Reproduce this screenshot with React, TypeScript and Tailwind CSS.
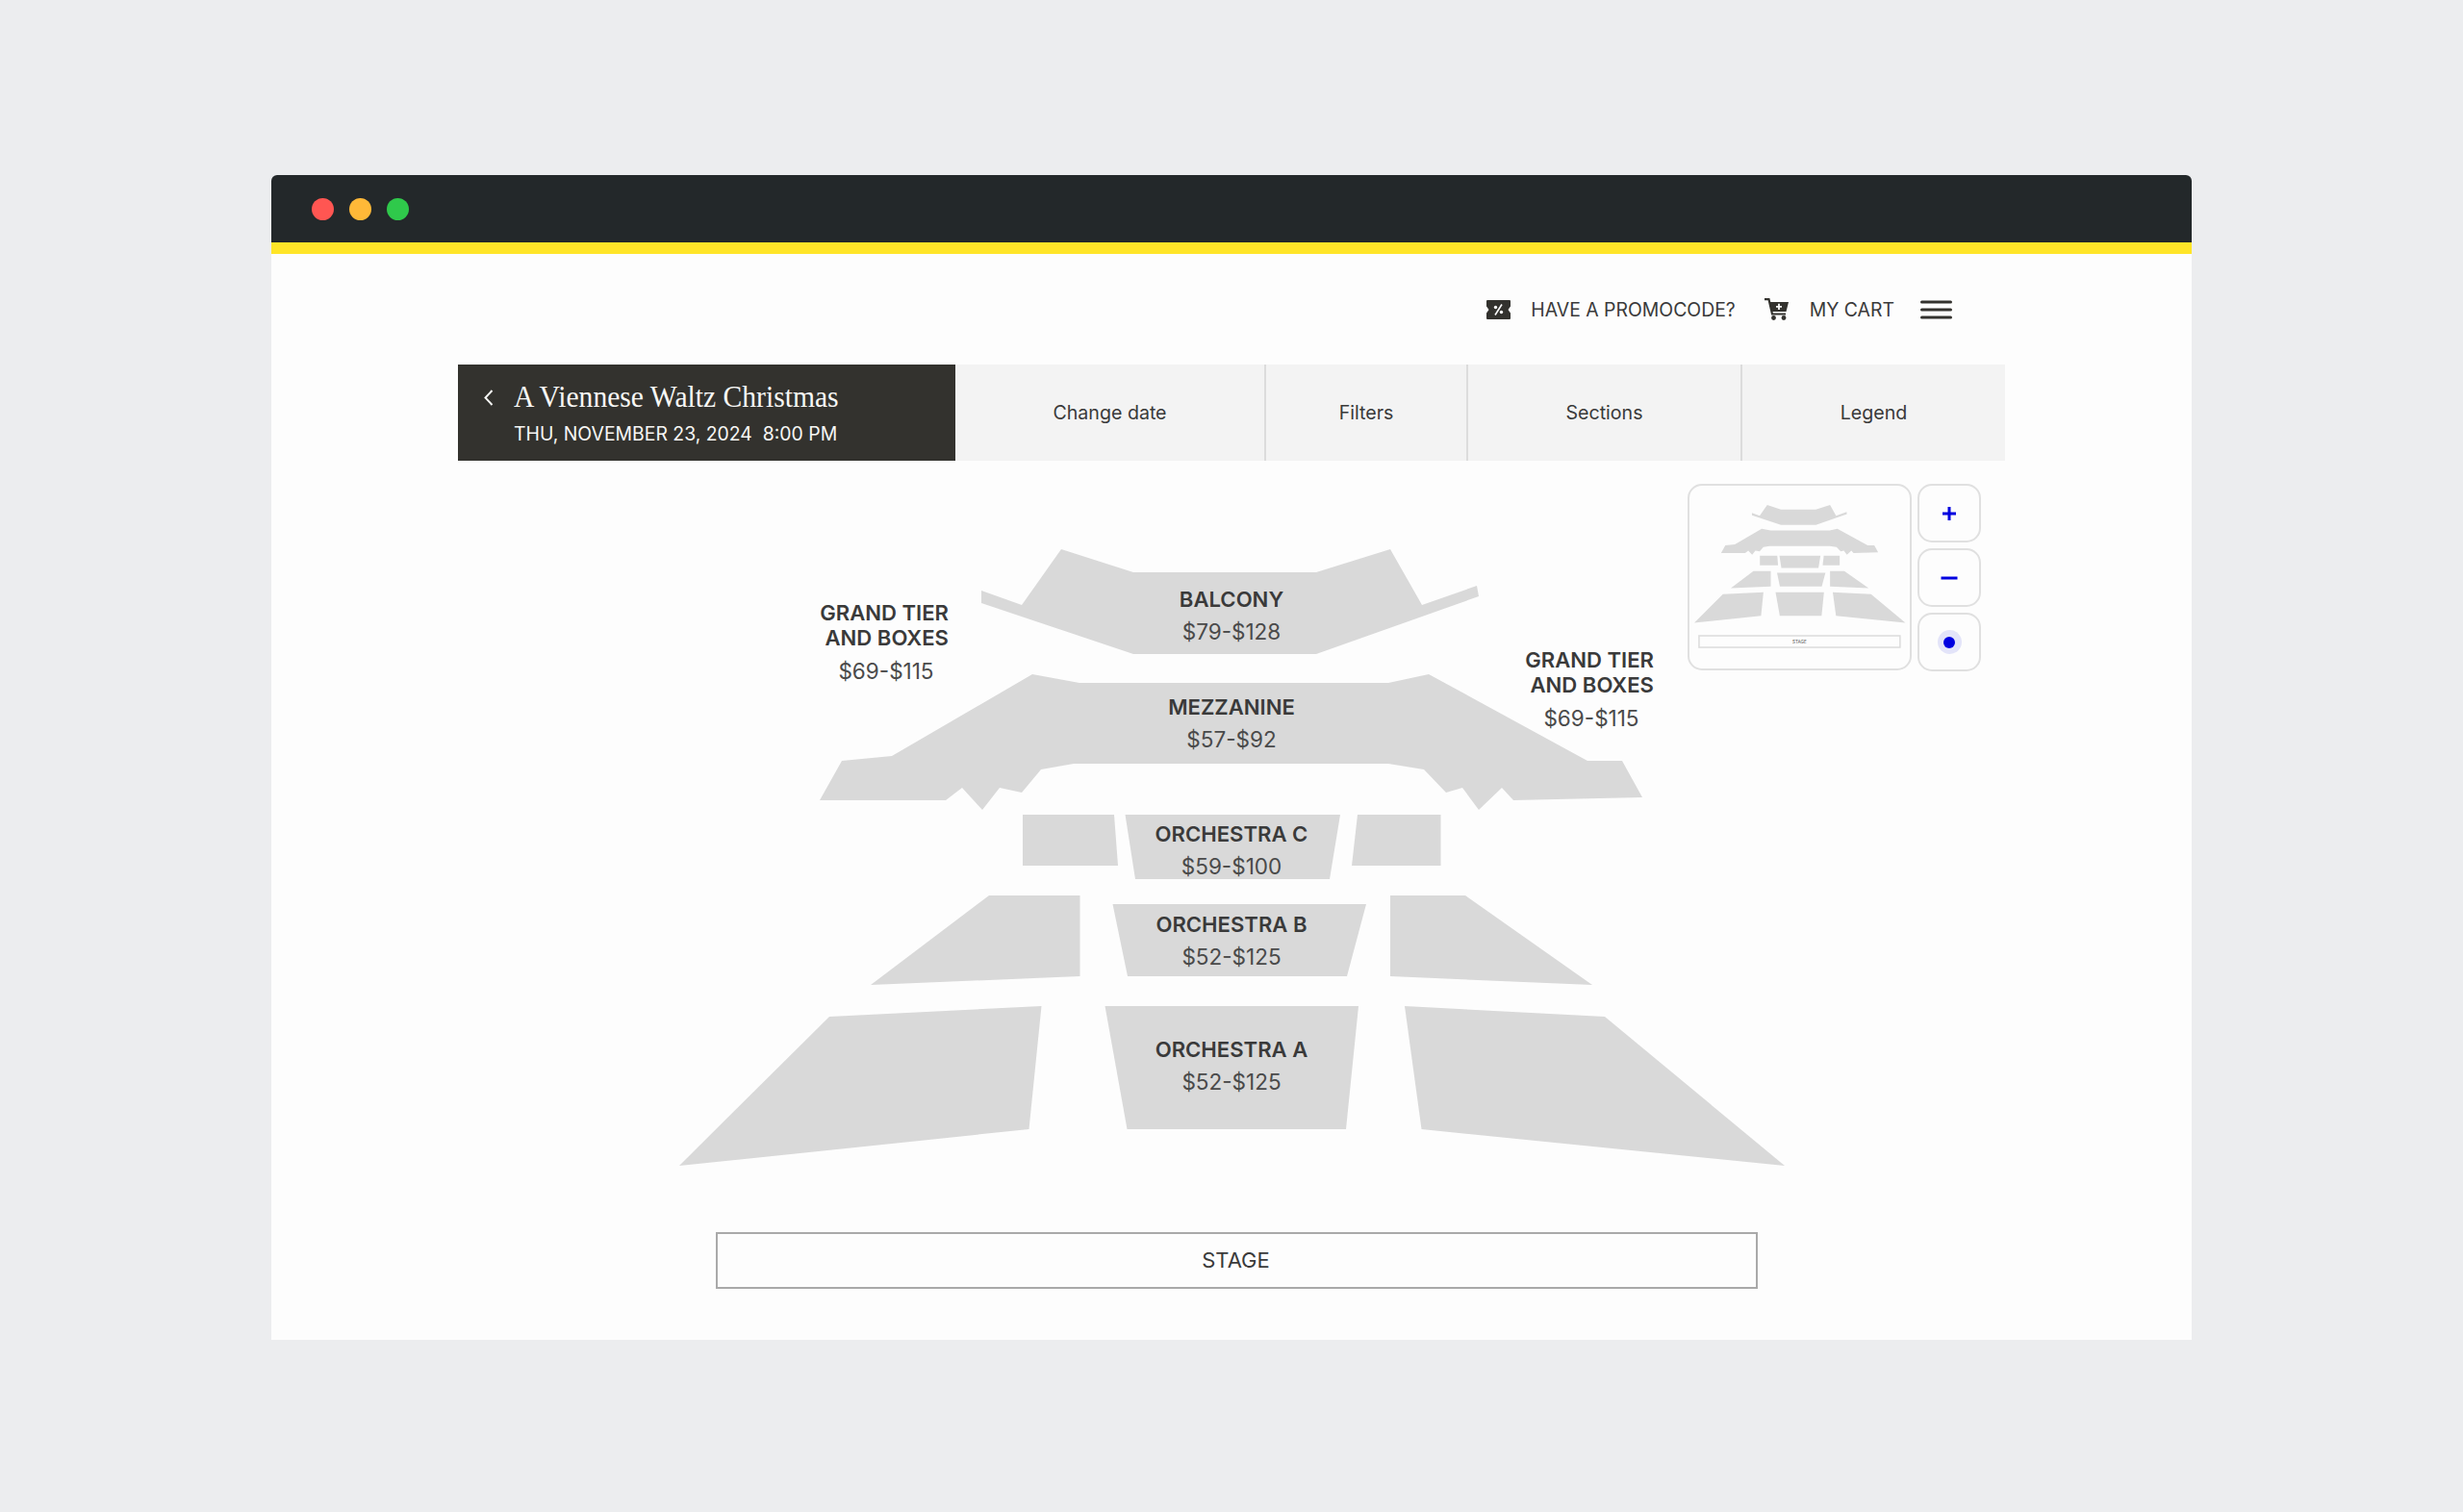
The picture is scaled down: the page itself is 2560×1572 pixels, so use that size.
import React from "react";

const SECTIONS: string[] = [
  "1103,570 1178,594 1368,594 1445,570 1478,628 1535,608 1537,619 1368,679 1178,679 1020,626 1020,613 1062,628",
  "1073,700 1122,709 1443,709 1485,700 1650,790 1686,790 1707,828 1573,831 1561,818 1537,841 1520,818 1503,823 1480,799 1443,793 1116,793 1082,799 1062,823 1039,818 1021,841 1000,818 983,831 852,831 875,790 927,785",
  "1063,846 1158,846 1162,899 1063,899",
  "1169.5,846 1393,846 1382,913 1180,913",
  "1411,846 1497.5,846 1497.5,899 1405,899",
  "1028,930 1122.5,930 1122.5,1014 905,1023",
  "1156.5,939 1420,939 1400,1014 1172,1014",
  "1445,930 1523,930 1655,1023 1445,1014",
  "862,1056 1082.5,1045 1069.5,1173 706,1211",
  "1148.5,1045 1412,1045 1399,1173 1171.5,1173",
  "1460,1045 1668,1056 1855,1211 1477.5,1173",
];

function Sections() {
  return (
    <g fill="#d9d9d9">
      {SECTIONS.map((points) => (
        <polygon key={points} points={points} />
      ))}
    </g>
  );
}

function PriceLabel({ name, price, className }: { name: string; price: string; className: string }) {
  return (
    <div className={`absolute -translate-x-1/2 whitespace-nowrap text-center ${className}`}>
      <div className="text-[22.1px] font-semibold leading-[30px] text-[#3a3a3a]">{name}</div>
      <div className="mt-[4px] text-[22.5px] leading-[30px] text-[#4a4a4a]">{price}</div>
    </div>
  );
}

function BoxLabel({ className }: { className: string }) {
  return (
    <div className={`absolute w-[136px] whitespace-nowrap text-center ${className}`}>
      <div className="text-right text-[22.1px] font-semibold leading-[26px] text-[#3a3a3a]">
        GRAND TIER
        <br />
        AND BOXES
      </div>
      <div className="mt-[7px] pl-[6px] text-[22.5px] leading-[30px] text-[#4a4a4a]">$69-$115</div>
    </div>
  );
}

function TabButton({ label, className }: { label: string; className: string }) {
  return (
    <div className={`flex items-center justify-center pt-[2px] text-[19.6px] text-[#3a3a3a] ${className}`}>{label}</div>
  );
}

function ControlButton({ children }: { children: React.ReactNode }) {
  return (
    <div className="flex h-[61px] w-[66px] items-center justify-center rounded-[15px] border-2 border-[#e0e0e0] bg-[#fdfdfd]">
      {children}
    </div>
  );
}

export default function App() {
  return (
    <div className="min-h-[1572px] bg-[#ecedef] px-[282px] pt-[182px] font-['Inter',sans-serif]">
      <div className="w-[1996px] overflow-hidden rounded-t-[6px] bg-[#fdfdfd]">
        <div className="flex h-[70px] items-center gap-[16px] bg-[#23282a] pl-[42px]">
          <div className="h-[23px] w-[23px] rounded-full bg-[#ff5652]" />
          <div className="h-[23px] w-[23px] rounded-full bg-[#ffb938]" />
          <div className="h-[23px] w-[23px] rounded-full bg-[#2fc94b]" />
        </div>
        <div className="h-[12px] bg-[#ffe528]" />

        <div className="flex h-[115px] items-center justify-end pr-[249px] text-[19.4px] text-[#3a3a3a]">
          <svg width="25" height="20" viewBox="0 0 25 20" className="mr-[21px]">
            <path d="M1 0H24Q25 0 25 1V6.5L22.5 10L25 13.5V19Q25 20 24 20H1Q0 20 0 19V13.5L2.5 10L0 6.5V1Q0 0 1 0Z" fill="#33322e" />
            <path d="M9 15.5L16 4.5" stroke="#fdfdfd" strokeWidth="1.6" />
            <circle cx="9.5" cy="7.5" r="1.7" fill="#fdfdfd" />
            <circle cx="15.5" cy="12.5" r="1.7" fill="#fdfdfd" />
          </svg>
          <span className="pt-[2px]">HAVE A PROMOCODE?</span>
          <svg width="25" height="23" viewBox="0 0 25 23" className="ml-[30px] mr-[22px]">
            <path d="M0 1.2H4.5L8 16.5H22" fill="none" stroke="#33322e" strokeWidth="2.2" />
            <path d="M5 4H25L22.5 14H7.5Z" fill="#33322e" />
            <path d="M15 5.8V12M12 8.9H18" stroke="#fdfdfd" strokeWidth="1.8" />
            <circle cx="9.5" cy="20.5" r="2.4" fill="#33322e" />
            <circle cx="20" cy="20.5" r="2.4" fill="#33322e" />
          </svg>
          <span className="pt-[2px]">MY CART</span>
          <svg width="33" height="20" viewBox="0 0 33 20" className="ml-[27px]">
            <path d="M1.5 2H31.5M1.5 10H31.5M1.5 18H31.5" stroke="#33322e" strokeWidth="3" strokeLinecap="round" />
          </svg>
        </div>

        <div className="ml-[194px] flex h-[100px] w-[1608px]">
          <div className="flex w-[517px] flex-col justify-center bg-[#33322e] pl-[27px] text-[#f7f7f5]">
            <div className="flex items-center gap-[21px]">
              <svg width="10" height="17" viewBox="0 0 10 17">
                <path d="M8.5 1L1.5 8.5L8.5 16" fill="none" stroke="#f7f7f5" strokeWidth="2" />
              </svg>
              <span className="origin-left scale-x-[0.955] whitespace-nowrap font-['Liberation_Serif',serif] text-[31px] leading-[38px]">
                A Viennese Waltz Christmas
              </span>
            </div>
            <div className="ml-[31px] mt-[6px] text-[19.4px] leading-[26px]">THU, NOVEMBER 23, 2024&nbsp;&nbsp;8:00 PM</div>
          </div>
          <TabButton label="Change date" className="w-[323px] border-r-2 border-[#dcdcdc] bg-[#f3f3f3]" />
          <TabButton label="Filters" className="w-[210px] border-r-2 border-[#dcdcdc] bg-[#f3f3f3]" />
          <TabButton label="Sections" className="w-[285px] border-r-2 border-[#dcdcdc] bg-[#f3f3f3]" />
          <TabButton label="Legend" className="w-[273px] bg-[#f3f3f3]" />
        </div>

        <div className="relative pb-[53px]">
          <svg className="block h-[802px] w-[1996px]" viewBox="282 478 1996 802">
            <Sections />
          </svg>

          <div className="ml-[462px] flex h-[59px] w-[1083px] items-center justify-center border-2 border-[#a9a9a9] pr-[2px] text-[22px] text-[#3a3a3a]">
            STAGE
          </div>

          <PriceLabel name="BALCONY" price="$79-$128" className="left-[998px] top-[129px]" />
          <PriceLabel name="MEZZANINE" price="$57-$92" className="left-[998px] top-[241px]" />
          <PriceLabel name="ORCHESTRA C" price="$59-$100" className="left-[998px] top-[373px]" />
          <PriceLabel name="ORCHESTRA B" price="$52-$125" className="left-[998px] top-[467px]" />
          <PriceLabel name="ORCHESTRA A" price="$52-$125" className="left-[998px] top-[597px]" />
          <BoxLabel className="left-[568px] top-[145px]" />
          <BoxLabel className="left-[1301px] top-[194px]" />

          <div className="absolute left-[1472px] top-[24px] flex gap-[6px]">
            <div className="h-[194px] w-[233px] rounded-[15px] border-2 border-[#e0e0e0] bg-[#fdfdfd]">
              <svg className="block h-full w-full" viewBox="680 465 1199 995">
                <Sections />
                <rect x="732" y="1282" width="1094" height="63" fill="#fdfdfd" stroke="#dcdcdc" strokeWidth="8" />
                <text x="1279" y="1322" fontSize="24" fill="#555555" textAnchor="middle">STAGE</text>
              </svg>
            </div>
            <div className="flex flex-col gap-[6px]">
              <ControlButton>
                <svg width="16" height="16" viewBox="0 0 16 16">
                  <path d="M8 1V15M1 8H15" stroke="#0000e0" strokeWidth="3" />
                </svg>
              </ControlButton>
              <ControlButton>
                <svg width="18" height="4" viewBox="0 0 18 4">
                  <path d="M0.5 2H17.5" stroke="#0000e0" strokeWidth="3" />
                </svg>
              </ControlButton>
              <ControlButton>
                <div className="flex h-[25px] w-[25px] items-center justify-center rounded-full bg-[#e3e4f9]">
                  <div className="h-[12px] w-[12px] rounded-full bg-[#0000e0]" />
                </div>
              </ControlButton>
            </div>
          </div>
        </div>
      </div>
    </div>
  );
}
